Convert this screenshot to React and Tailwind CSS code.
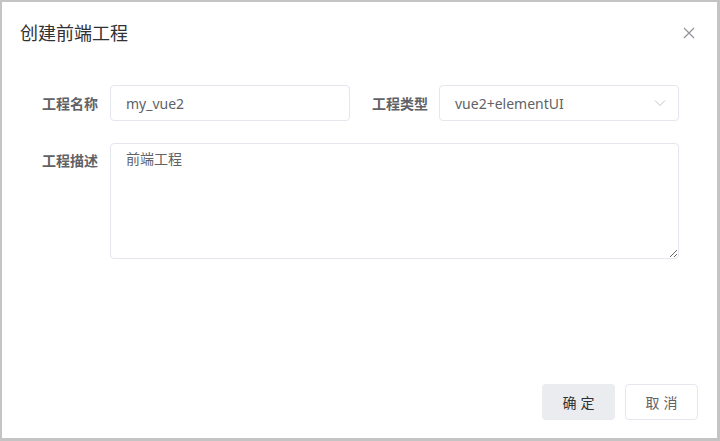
import React from 'react';

const font = { fontFamily: '"Noto Sans", "Noto Sans CJK SC", sans-serif' };

function Chevron() {
  return (
    <svg width="12" height="8" viewBox="0 0 12 8" fill="none">
      <path d="M1 1.5 L6 6.5 L11 1.5" stroke="#c0c4cc" strokeWidth="1" />
    </svg>
  );
}

function CloseIcon() {
  return (
    <svg width="12" height="12" viewBox="0 0 12 12" fill="none">
      <path d="M1 1 L11 11 M11 1 L1 11" stroke="#909399" strokeWidth="1.2" />
    </svg>
  );
}

export default function App() {
  return (
    <div
      className="w-[720px] h-[441px] bg-[#c4c4c4] pt-[2px] pl-[2px] pr-[3px] pb-[3px]"
      style={font}
    >
      <div className="w-full h-full bg-white flex flex-col">
        {/* header */}
        <div className="flex items-center justify-between h-[62px] pl-[18px] pr-[22px]">
          <span className="text-[18px] text-[#303133] leading-6">创建前端工程</span>
          <CloseIcon />
        </div>

        {/* form */}
        <div className="flex flex-col gap-[22px] pt-[21px]">
          <div className="flex items-center h-[36px]">
            <label className="w-[96px] text-right text-[14px] font-bold text-[#606266]">工程名称</label>
            <div className="ml-[12px] w-[240px] h-[36px] border border-[#e4e7ed] rounded-[4px] flex items-center px-[15px] text-[14px] text-[#606266]">
              my_vue2
            </div>
            <label className="ml-[22px] w-[56px] text-right text-[14px] font-bold text-[#606266]">工程类型</label>
            <div className="ml-[11px] w-[240px] h-[36px] border border-[#e4e7ed] rounded-[4px] flex items-center justify-between pl-[15px] pr-[12px] text-[14px] text-[#606266]">
              <span>vue2+elementUI</span>
              <Chevron />
            </div>
          </div>

          <div className="flex items-start">
            <label className="w-[96px] text-right text-[14px] font-bold text-[#606266] leading-[36px]">工程描述</label>
            <textarea
              readOnly
              defaultValue="前端工程"
              className="ml-[12px] w-[569px] h-[116px] border border-[#e4e7ed] rounded-[4px] px-[15px] py-[4px] text-[14px] leading-[21px] text-[#606266] outline-none resize-y"
              style={font}
            />
          </div>
        </div>

        {/* footer */}
        <div className="mt-auto flex justify-end gap-[10px] pr-[19px] pb-[18px]">
          <button className="w-[73px] h-[36px] rounded-[4px] bg-[#ebecf0] text-[14px] text-[#303133] tracking-[4px] pl-[4px]">
            确定
          </button>
          <button className="w-[73px] h-[36px] rounded-[4px] bg-white border border-[#e4e7ed] text-[14px] text-[#606266] tracking-[4px] pl-[4px]">
            取消
          </button>
        </div>
      </div>
    </div>
  );
}
